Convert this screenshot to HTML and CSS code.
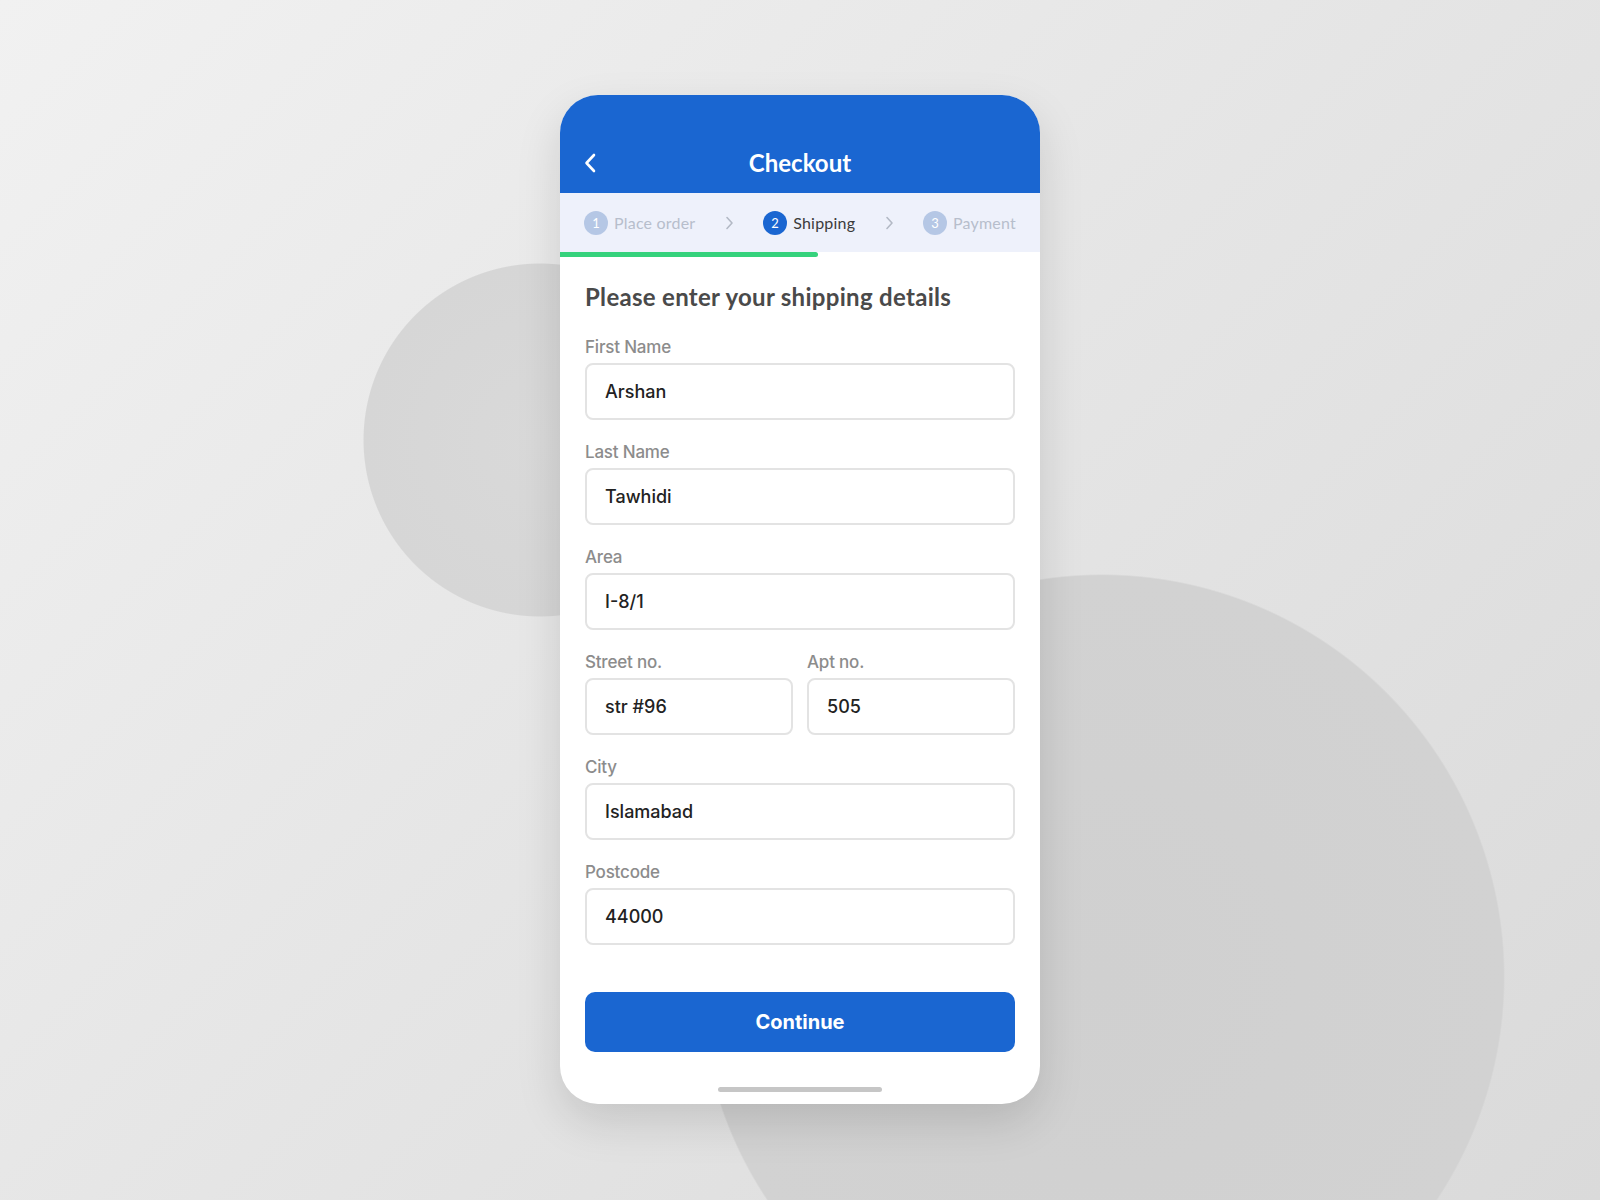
FILE: index.html
```html
<!DOCTYPE html>
<html lang="en">
<head>
  <meta charset="UTF-8" />
  <meta name="viewport" content="width=device-width, initial-scale=1.0" />
  <title>Checkout</title>
  <link rel="stylesheet" href="styles.css">
</head>
<body>

  <div class="phone">
    <!-- Header -->
    <div class="top-bar">
      <button type="button" class="back-btn" aria-label="Back">
        <svg width="14" height="22" viewBox="0 0 14 22">
          <path d="M11 3 L3.5 11 L11 19" fill="none" stroke="#fff" stroke-width="2.6" stroke-linecap="round" stroke-linejoin="round"/>
        </svg>
      </button>
      <h1>Checkout</h1>
      <span></span>
    </div>

    <!-- Steps -->
    <div class="steps">
      <div class="step">
        <span class="step-num">1</span>
        <span>Place order</span>
      </div>
      <svg class="step-arrow" width="10" height="16" viewBox="0 0 10 16">
        <path d="M3 2.5 L8 8 L3 13.5" fill="none" stroke="#b3b9c5" stroke-width="1.6" stroke-linecap="round" stroke-linejoin="round"/>
      </svg>
      <div class="step active">
        <span class="step-num">2</span>
        <span>Shipping</span>
      </div>
      <svg class="step-arrow" width="10" height="16" viewBox="0 0 10 16">
        <path d="M3 2.5 L8 8 L3 13.5" fill="none" stroke="#b3b9c5" stroke-width="1.6" stroke-linecap="round" stroke-linejoin="round"/>
      </svg>
      <div class="step">
        <span class="step-num">3</span>
        <span>Payment</span>
      </div>
    </div>
    <div class="progress"><div class="progress-fill"></div></div>

    <!-- Form -->
    <form class="shipping-form">
      <h2>Please enter your shipping details</h2>

      <div class="field">
        <label for="firstName">First Name</label>
        <input type="text" id="firstName" value="Arshan" />
      </div>

      <div class="field">
        <label for="lastName">Last Name</label>
        <input type="text" id="lastName" value="Tawhidi" />
      </div>

      <div class="field">
        <label for="area">Area</label>
        <input type="text" id="area" value="I-8/1" />
      </div>

      <div class="field-row">
        <div class="field">
          <label for="street">Street no.</label>
          <input type="text" id="street" value="str #96" />
        </div>
        <div class="field">
          <label for="apt">Apt no.</label>
          <input type="text" id="apt" value="505" />
        </div>
      </div>

      <div class="field">
        <label for="city">City</label>
        <input type="text" id="city" value="Islamabad" />
      </div>

      <div class="field">
        <label for="postcode">Postcode</label>
        <input type="text" id="postcode" value="44000" />
      </div>

      <button type="button" class="continue-btn">Continue</button>
    </form>

    <div class="home-bar"></div>
  </div>

</body>
</html>
```

FILE: styles.css
```css
* {
  margin: 0;
  padding: 0;
  box-sizing: border-box;
}

body {
  min-height: 1200px;
  display: flex;
  justify-content: center;
  align-items: flex-start;
  padding-top: 95px;
  font-family: "Inter", "Liberation Sans", sans-serif;
  background:
    radial-gradient(circle 177px at 540px 440px, #d9d9d9 0, #d6d6d6 99.4%, transparent 100%),
    radial-gradient(circle 403px at 1102px 977px, #d0d0d0 0, #d2d2d2 99.6%, transparent 100%),
    linear-gradient(135deg, #f1f1f1 0%, #e5e5e5 50%, #dadada 100%);
}

.phone {
  width: 480px;
  height: 1009px;
  background: #fff;
  border-radius: 38px;
  overflow: hidden;
  box-shadow: 0 18px 45px rgba(0, 0, 0, 0.13);
  display: flex;
  flex-direction: column;
}

.top-bar {
  background: #1a66d1;
  padding: 53px 18px 15px;
  display: grid;
  grid-template-columns: 40px 1fr 40px;
  align-items: center;
}

.top-bar h1 {
  font-family: "Lato", "Liberation Sans", sans-serif;
  font-size: 24px;
  line-height: 30px;
  font-weight: 700;
  color: #fff;
  text-align: center;
}

.back-btn {
  background: none;
  border: none;
  width: 20px;
  height: 30px;
  display: flex;
  align-items: center;
  justify-content: center;
  margin-left: 2px;
  cursor: pointer;
}

.steps {
  height: 59px;
  background: #eef1fb;
  padding: 0 24px;
  display: flex;
  align-items: center;
  justify-content: space-between;
}

.step {
  display: flex;
  align-items: center;
  gap: 6px;
  font-family: "Lato", "Liberation Sans", sans-serif;
  font-size: 16px;
  letter-spacing: 0.2px;
  color: #b7becc;
}

.step-num {
  width: 24px;
  height: 24px;
  border-radius: 50%;
  background: #b5c7e5;
  color: #fff;
  font-size: 13px;
  display: flex;
  align-items: center;
  justify-content: center;
}

.step.active {
  color: #3b3b3b;
}

.step.active .step-num {
  background: #1a66d1;
}

.progress {
  height: 5px;
}

.progress-fill {
  width: 258px;
  height: 100%;
  background: #35d27c;
  border-radius: 0 3px 3px 0;
}

.shipping-form {
  padding: 26px 25px 0;
}

.shipping-form h2 {
  font-family: "Lato", "Liberation Sans", sans-serif;
  font-size: 24px;
  line-height: 28px;
  font-weight: 700;
  letter-spacing: 0.3px;
  color: #4a4a4a;
  margin-bottom: 26px;
}

.field {
  margin-bottom: 22px;
}

label {
  display: block;
  font-size: 17px;
  line-height: 20px;
  font-weight: 500;
  color: #8c8c8c;
  letter-spacing: -0.2px;
  margin-bottom: 6px;
}

input[type="text"] {
  width: 100%;
  height: 57px;
  border: 2px solid #e3e3e3;
  border-radius: 8px;
  padding: 0 18px;
  font-family: "Inter", "Liberation Sans", sans-serif;
  font-size: 18px;
  font-weight: 500;
  color: #222;
  background: #fff;
  outline: none;
}

.field-row {
  display: grid;
  grid-template-columns: 1fr 1fr;
  gap: 14px;
}

.continue-btn {
  display: block;
  width: 100%;
  height: 60px;
  margin-top: 47px;
  border: none;
  border-radius: 10px;
  background: #1a66d1;
  color: #fff;
  font-family: "Inter", "Liberation Sans", sans-serif;
  font-size: 20px;
  font-weight: 700;
  cursor: pointer;
}

.home-bar {
  width: 164px;
  height: 5px;
  border-radius: 3px;
  background: #c6c6c6;
  margin: 35px auto 0;
}
```
